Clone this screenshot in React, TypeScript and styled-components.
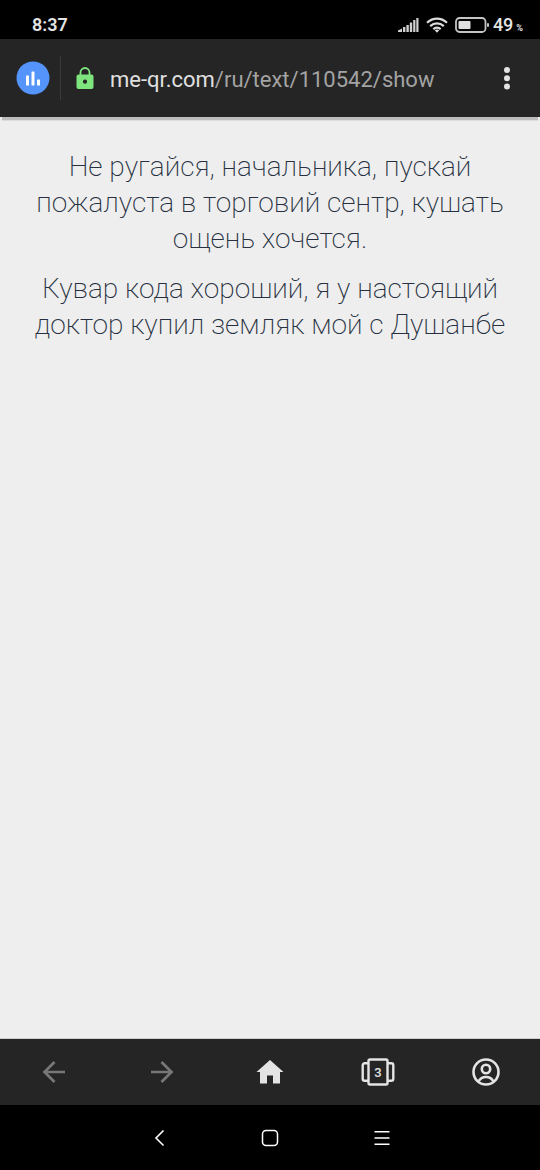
import React from "react";
import styled, { createGlobalStyle } from "styled-components";

const GlobalStyle = createGlobalStyle`
  *, *::before, *::after { box-sizing: border-box; }
  body {
    margin: 0;
    background: #eeeeee;
    font-family: Roboto, "Noto Sans", sans-serif;
  }
`;

const Screen = styled.div`
  display: flex;
  flex-direction: column;
  min-height: 100vh;
`;

const StatusBar = styled.div`
  display: flex;
  align-items: center;
  justify-content: space-between;
  height: 39px;
  padding: 10px 17px 0 32px;
  background: #000;
  color: #e4e4e4;
  font-size: 18px;
  font-weight: 500;
  line-height: 28px;
`;

const Clock = styled.time`
  font-weight: 600;
`;

const StatusGroup = styled.div`
  display: flex;
  align-items: center;
  gap: 7px;

  svg { display: block; }
`;

const BatteryLevel = styled.span`
  display: flex;
  align-items: baseline;
  gap: 3px;
  margin-left: -4px;
`;

const PercentSign = styled.span`
  font-size: 9px;
  font-weight: 700;
  line-height: 12px;
`;

const IconButton = styled.button<{ $color?: string }>`
  display: flex;
  align-items: center;
  justify-content: center;
  padding: 0;
  border: 0;
  background: none;
  color: ${({ $color }) => $color ?? "#e4e4e4"};
  cursor: pointer;

  svg { display: block; }
`;

const AddressBar = styled.header`
  display: flex;
  align-items: center;
  height: 78px;
  padding: 0 20px 0 16px;
  background: #252525;
`;

const BarDivider = styled.span`
  width: 1px;
  height: 44px;
  margin: 0 15px 0 10px;
  background: #3a3a3a;
`;

const AddressButton = styled.button`
  display: flex;
  flex: 1;
  align-items: center;
  gap: 16px;
  min-width: 0;
  padding: 0;
  border: 0;
  background: none;
  color: #a3a3a3;
  font-family: inherit;
  font-size: 22px;
  line-height: 28px;
  text-align: left;
  cursor: pointer;

  svg { display: block; flex: none; }
`;

const Url = styled.span`
  padding-top: 3px;
`;

const Host = styled.span`
  color: #e0e0e0;
`;

const BarShadow = styled.div`
  height: 3px;
  margin: 0 2px;
  background: #bdbdbd;
  box-shadow: 0 1px 1px #dadada;
`;

const Page = styled.main`
  flex: 1;
  padding: 29px 30px;
  color: #263040;
  text-align: center;
`;

const Message = styled.p`
  margin: 0 0 14px;
  font-size: 28px;
  font-weight: 200;
  line-height: 36px;
`;

const BrowserToolbar = styled.nav`
  display: grid;
  grid-template-columns: repeat(5, 1fr);
  height: 67px;
  border-top: 1px solid #cfcfcf;
  background: #252525;
`;

const TabsButton = styled(IconButton)`
  position: relative;
`;

const TabCount = styled.span`
  position: absolute;
  inset: 0;
  display: flex;
  align-items: center;
  justify-content: center;
  font-family: Roboto, sans-serif;
  font-size: 13px;
  font-weight: 500;
`;

const SystemNav = styled.nav`
  display: grid;
  grid-template-columns: repeat(3, 111px);
  justify-content: center;
  height: 65px;
  background: #000;
`;

const SignalIcon = () => (
  <svg width="21" height="16" viewBox="0 0 21 16" fill="#cfcfcf" aria-hidden="true">
    <path d="M0 15v-1.500l4-2V15z" />
    <rect x="5" y="10" width="2.400" height="5" />
    <rect x="8.400" y="8" width="2.400" height="7" />
    <rect x="11.800" y="5.500" width="2.400" height="9.500" />
    <rect x="15.200" y="3" width="2.200" height="12" />
    <rect x="18.300" y="1" width="2.200" height="14" />
  </svg>
);

const WifiIcon = () => (
  <svg width="22" height="16" viewBox="0 0 22 16" fill="none" stroke="#dcdcdc" strokeWidth="2.2" aria-hidden="true">
    <path d="M1 5.8C7 .2 15 .2 21 5.8" />
    <path d="M4.2 9.1c4-3.7 9.600-3.7 13.600 0" />
    <path d="M7.300 12.200c2.300-2 5.100-2 7.400 0" />
    <path d="M8.700 13.200c1.400-1.100 3.200-1.100 4.600 0L11 15.700z" fill="#dcdcdc" stroke="none" />
  </svg>
);

const BatteryIcon = () => (
  <svg width="35" height="16" viewBox="0 0 35 16" aria-hidden="true">
    <rect x="1" y="1" width="29.500" height="14" rx="3.500" fill="none" stroke="#c4c4c4" strokeWidth="1.800" />
    <rect x="3.500" y="4" width="12" height="8" rx="1" fill="#dedede" />
    <rect x="32" y="6" width="2" height="4" rx="1" fill="#c4c4c4" />
  </svg>
);

const StatsIcon = () => (
  <svg width="34" height="34" viewBox="0 0 34 34" aria-hidden="true">
    <circle cx="17" cy="17" r="16.500" fill="#5494fb" />
    <g fill="#fff">
      <rect x="10" y="14.500" width="3" height="10" rx=".5" />
      <rect x="15.500" y="10.500" width="3" height="14" rx=".5" />
      <rect x="21" y="18.500" width="3" height="6" rx=".5" />
    </g>
  </svg>
);

const LockIcon = () => (
  <svg width="18" height="22" viewBox="0 0 18 22" aria-hidden="true">
    <path d="M4.500 9V5.500a4.500 4.500 0 0 1 9 0V9" fill="none" stroke="#7ee47e" strokeWidth="1.800" />
    <rect x=".5" y="7.500" width="17" height="14.500" rx="2" fill="#7ee47e" />
    <circle cx="9" cy="14.700" r="2.100" fill="#252525" />
  </svg>
);

const MoreIcon = () => (
  <svg width="26" height="26" viewBox="0 0 26 26" fill="currentColor" aria-hidden="true">
    <circle cx="13" cy="5" r="3" />
    <circle cx="13" cy="13.200" r="3" />
    <circle cx="13" cy="21.500" r="3" />
  </svg>
);

const ArrowIcon = ({ forward = false }: { forward?: boolean }) => (
  <svg width="24" height="24" viewBox="0 0 24 24" fill="none" stroke="currentColor" strokeWidth="2.700" aria-hidden="true">
    {forward ? <path d="M1 12h20M11.500 2l10 10-10 10" /> : <path d="M23 12H3M12.500 2l-10 10 10 10" />}
  </svg>
);

const HomeIcon = () => (
  <svg width="28" height="24" viewBox="0 0 28 24" fill="currentColor" aria-hidden="true">
    <path d="M14 0L.5 12H4v11.500h7v-8h6v8h7V12h3.500z" />
  </svg>
);

const TabsIcon = () => (
  <svg width="34" height="28" viewBox="0 0 34 28" fill="none" stroke="currentColor" strokeWidth="2.400" aria-hidden="true">
    <rect x="7.500" y="1.500" width="19" height="25" rx="1.500" />
    <path d="M7.500 5.200H3.700a2 2 0 0 0-2 2v13.600a2 2 0 0 0 2 2h3.800M26.500 5.200h3.800a2 2 0 0 1 2 2v13.600a2 2 0 0 1-2 2h-3.800" />
  </svg>
);

const ProfileIcon = () => (
  <svg width="28" height="28" viewBox="0 0 28 28" fill="none" stroke="currentColor" strokeWidth="2.600" aria-hidden="true">
    <circle cx="14" cy="14" r="12.500" />
    <circle cx="14" cy="11" r="4.200" />
    <path d="M6.500 23.500c1.500-3 4.300-4.500 7.500-4.500s6 1.500 7.500 4.500" />
  </svg>
);

const SystemBackIcon = () => (
  <svg width="18" height="18" viewBox="0 0 18 18" fill="none" stroke="#fff" strokeWidth="1.600" aria-hidden="true">
    <path d="M13.500 1.500L6 9l7.500 7.500" />
  </svg>
);

const SystemHomeIcon = () => (
  <svg width="18" height="18" viewBox="0 0 18 18" fill="none" stroke="#fff" strokeWidth="1.500" aria-hidden="true">
    <rect x="1.500" y="1.500" width="15" height="15" rx="3.500" />
  </svg>
);

const SystemMenuIcon = () => (
  <svg width="18" height="16" viewBox="0 0 18 16" fill="#fff" aria-hidden="true">
    <rect x="2.500" y="1" width="15" height="1.500" />
    <rect x="2.500" y="7.250" width="15" height="1.500" />
    <rect x="2.500" y="13.500" width="15" height="1.500" />
  </svg>
);

export default function App() {
  return (
    <>
      <GlobalStyle />
      <Screen>
        <StatusBar>
          <Clock>8:37</Clock>
          <StatusGroup>
            <SignalIcon />
            <WifiIcon />
            <BatteryIcon />
            <BatteryLevel>
              <span>49</span>
              <PercentSign>%</PercentSign>
            </BatteryLevel>
          </StatusGroup>
        </StatusBar>

        <AddressBar>
          <IconButton type="button" aria-label="Статистика">
            <StatsIcon />
          </IconButton>
          <BarDivider />
          <AddressButton type="button">
            <LockIcon />
            <Url>
              <Host>me-qr.com</Host>/ru/text/110542/show
            </Url>
          </AddressButton>
          <IconButton type="button" aria-label="Меню">
            <MoreIcon />
          </IconButton>
        </AddressBar>
        <BarShadow />

        <Page>
          <Message>
            Не ругайся, начальника, пускай пожалуста в торговий сентр, кушать ощень хочется.
          </Message>
          <Message>Кувар кода хороший, я у настоящий доктор купил земляк мой с Душанбе</Message>
        </Page>

        <BrowserToolbar aria-label="Браузер">
          <IconButton type="button" aria-label="Назад" $color="#777777">
            <ArrowIcon />
          </IconButton>
          <IconButton type="button" aria-label="Вперёд" $color="#777777">
            <ArrowIcon forward />
          </IconButton>
          <IconButton type="button" aria-label="Домой">
            <HomeIcon />
          </IconButton>
          <TabsButton type="button" aria-label="Вкладки: 3">
            <TabsIcon />
            <TabCount>3</TabCount>
          </TabsButton>
          <IconButton type="button" aria-label="Профиль">
            <ProfileIcon />
          </IconButton>
        </BrowserToolbar>

        <SystemNav aria-label="Система">
          <IconButton type="button" aria-label="Системная кнопка назад">
            <SystemBackIcon />
          </IconButton>
          <IconButton type="button" aria-label="Главный экран">
            <SystemHomeIcon />
          </IconButton>
          <IconButton type="button" aria-label="Недавние приложения">
            <SystemMenuIcon />
          </IconButton>
        </SystemNav>
      </Screen>
    </>
  );
}
